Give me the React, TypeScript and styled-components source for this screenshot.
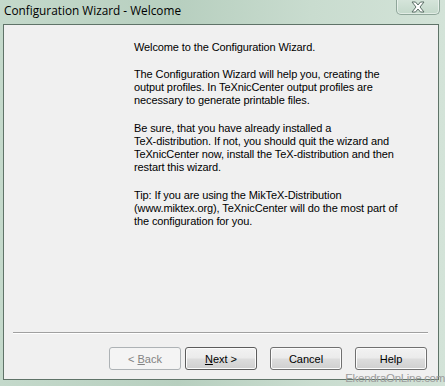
import React from 'react';
import { styled, createGlobalStyle } from 'styled-components';

const GlobalStyle = createGlobalStyle`
  html, body {
    margin: 0;
    padding: 0;
    background: #c9dccf;
  }
`;

const paragraphs = [
  ['Welcome to the Configuration Wizard.'],
  [
    'The Configuration Wizard will help you, creating the',
    'output profiles. In TeXnicCenter output profiles are',
    'necessary to generate printable files.',
  ],
  [
    'Be sure, that you have already installed a',
    'TeX-distribution. If not, you should quit the wizard and',
    'TeXnicCenter now, install the TeX-distribution and then',
    'restart this wizard.',
  ],
  [
    'Tip: If you are using the MikTeX-Distribution',
    '(www.miktex.org), TeXnicCenter will do the most part of',
    'the configuration for you.',
  ],
];

const CloseIcon = () => (
  <svg width="16" height="12" viewBox="0 0 16 12">
    <path
      d="M2 1 H5.5 L8 4 L10.5 1 H14 L10 6 L14 11 H10.5 L8 8 L5.5 11 H2 L6 6 Z"
      fill="#ffffff"
      stroke="#5b6e66"
      strokeWidth="1"
      strokeLinejoin="round"
    />
  </svg>
);

const App = () => {
  return (
    <>
      <GlobalStyle />
      <StWindow>
        <StTitleBar>
          <StTitle>Configuration Wizard - Welcome</StTitle>
          <StCloseButton>
            <CloseIcon />
          </StCloseButton>
        </StTitleBar>
        <StClient>
          <StContent>
            {paragraphs.map((lines, i) => (
              <StParagraph key={i}>
                {lines.map((line, j) => (
                  <StLine key={j}>{line}</StLine>
                ))}
              </StParagraph>
            ))}
          </StContent>
          <StSeparator />
          <StButtonRow>
            <StButton disabled $gap={4}>
              &lt; <u>B</u>ack
            </StButton>
            <StButton $default $gap={13}>
              <u>N</u>ext &gt;
            </StButton>
            <StButton $gap={13}>Cancel</StButton>
            <StButton $gap={0}>Help</StButton>
          </StButtonRow>
        </StClient>
        <StWatermark>EkendraOnLine.com</StWatermark>
      </StWindow>
    </>
  );
};

export default App;

const StWindow = styled.div`
  position: relative;
  width: 445px;
  height: 386px;
  box-sizing: border-box;
  padding: 0 6px 6px 3px;
  display: flex;
  flex-direction: column;
  background: linear-gradient(90deg, #c4d9cb 0%, #b7cfbf 40%, #c9dccf 70%, #d3e3d8 100%);
  overflow: hidden;
`;

const StTitleBar = styled.div`
  height: 24px;
  display: flex;
  justify-content: space-between;
  align-items: flex-start;
`;

const StTitle = styled.span`
  font-family: 'Open Sans', 'Noto Sans', sans-serif;
  font-size: 11.8px;
  line-height: 21px;
  color: #000;
  padding-left: 1px;
`;

const StCloseButton = styled.div`
  width: 44px;
  height: 16px;
  margin-top: -1px;
  margin-right: -1px;
  box-sizing: border-box;
  border: 1px solid #8fa69a;
  border-top: none;
  border-radius: 0 0 5px 5px;
  background: linear-gradient(180deg, #d6e5db 0%, #c3d8ca 100%);
  box-shadow: inset 0 0 0 1px rgba(255, 255, 255, 0.5);
  display: flex;
  justify-content: center;
  align-items: center;
`;

const StClient = styled.div`
  flex: 1;
  display: flex;
  flex-direction: column;
  background: #f0f0f0;
  border: 1px solid #5f7368;
`;

const StContent = styled.div`
  flex: 1;
  padding: 16px 0 0 130px;
  font-family: 'Liberation Sans', Arial, sans-serif;
  font-size: 11px;
  line-height: 13px;
  letter-spacing: -0.11px;
  color: #000;
`;

const StParagraph = styled.div`
  margin-bottom: 15px;

  &:first-child {
    margin-bottom: 14px;
  }
`;

const StLine = styled.div`
  white-space: nowrap;
`;

const StSeparator = styled.div`
  margin: 0 10px 0 9px;
  border-top: 1px solid #a0a0a0;
  border-bottom: 1px solid #ffffff;
`;

const StButtonRow = styled.div`
  display: flex;
  justify-content: flex-end;
  padding: 13px 11px 9px 0;
`;

const StButton = styled.button<{ $default?: boolean; $gap: number }>`
  width: 72px;
  height: 23px;
  margin-right: ${(p) => p.$gap}px;
  padding: 0;
  box-sizing: border-box;
  border: 1px solid ${(p) => (p.$default ? '#5c5c5c' : '#707070')};
  border-radius: 3px;
  background: linear-gradient(180deg, #f2f2f2 0%, #ebebeb 48%, #dddddd 52%, #cfcfcf 100%);
  box-shadow: inset 0 0 0 1px #fcfcfc;
  font-family: 'Liberation Sans', Arial, sans-serif;
  font-size: 11px;
  color: #000;

  &:disabled {
    border-color: #adb2b5;
    background: #f4f4f4;
    box-shadow: none;
    color: #838383;
  }

  u {
    text-decoration: underline;
    text-underline-offset: 1px;
  }
`;

const StWatermark = styled.span`
  position: absolute;
  right: 0;
  bottom: 1px;
  font-family: 'Liberation Sans', Arial, sans-serif;
  font-size: 11.5px;
  line-height: 13px;
  color: #9c9c9c;
  letter-spacing: -0.3px;
`;
